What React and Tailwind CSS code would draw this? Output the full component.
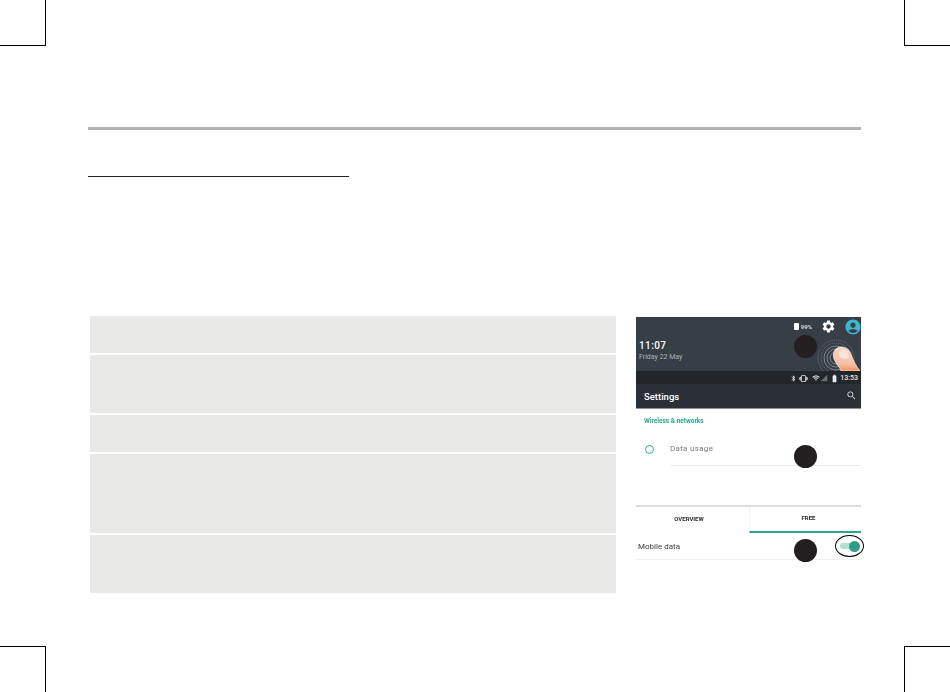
import React from "react";
import { MdSettings, MdAccountCircle, MdBluetooth, MdWifi, MdSignalCellular4Bar, MdBatteryFull, MdVibration, MdSearch } from "react-icons/md";

const rows = [37, 58, 37, 79, 58];

function Crop({ className }) {
  return <div className={"w-[46px] h-[46px] border-black " + className} />;
}

function Dot({ className }) {
  return <div className={"absolute w-[23px] h-[23px] rounded-full bg-[#231f20] " + className} />;
}

function Finger() {
  return (
    <svg className="absolute left-[170px] top-0 overflow-hidden" width="55" height="54" viewBox="0 0 55 54" fill="none">
      <defs>
        <linearGradient id="skin" x1="0" y1="30" x2="0" y2="54" gradientUnits="userSpaceOnUse">
          <stop offset="0" stopColor="#f8d4c3" />
          <stop offset="0.7" stopColor="#f6c0a6" />
          <stop offset="1" stopColor="#ee9460" />
        </linearGradient>
      </defs>
      {[6, 9, 12, 15, 18].map((r) => (
        <circle key={r} cx="30" cy="41" r={r} stroke="#c9ced3" strokeWidth="0.5" strokeDasharray={r > 12 ? "1 1" : undefined} opacity={r > 12 ? 0.7 : 0.95} />
      ))}
      <path d="M28 42C26 36 29 30 35 30C40 30 43 32 45 37C47 43 50 49 54 54L35 54C34 50 30 47 28 42Z" fill="url(#skin)" stroke="#fff" strokeWidth="0.6" />
      <path d="M33 38C32 34 36 31.500 39 32.500C42 34 43.500 39 42.500 41C40 43 34 42 33 38Z" fill="#fbe3d8" />
    </svg>
  );
}

function Phone() {
  return (
    <div className="relative w-[225px] mt-[1px] h-[276px] font-['Roboto',sans-serif] blur-[0.3px]">
      <div className="relative h-[54px] bg-[#373e46] flex flex-col">
        <div className="flex items-center justify-end h-[19px] text-white">
          <div className="w-[5px] h-[7px] bg-white rounded-[1px] mr-[2px]" />
          <span className="text-[6px] leading-none mr-[9px] text-[#e4e6e8] font-medium">99%</span>
          <MdSettings size={15} className="mr-[8px]" />
          <MdAccountCircle size={18} className="text-[#3fb6d0] -mr-[1px]" />
        </div>
        <div className="pl-[3px] mt-[4px] text-white text-[10px] leading-[12px] font-medium tracking-[0.4px]">11:07</div>
        <div className="pl-[3px] mt-[1px] text-[#aeb3b8] text-[7px] leading-[9px]">Friday 22 May</div>
        <Finger />
      </div>
      <div className="h-[13px] bg-[#22262a] flex items-center justify-end pr-[3px] pt-[1px] text-[#e8eaec]">
        <MdBluetooth size={7} className="mr-[2px]" />
        <MdVibration size={9} className="mr-[4px]" />
        <MdWifi size={8} />
        <MdSignalCellular4Bar size={8} className="mr-[2px] text-[#6b7075]" />
        <MdBatteryFull size={9} className="mr-[1px]" />
        <span className="text-[7px] leading-none font-medium">13:53</span>
      </div>
      <div className="h-[25px] bg-[#2b3036] flex items-center justify-between pl-[8px] pr-[4px] pt-[2px] text-white border-b border-[#8d9094]">
        <span className="text-[9.500px] font-medium">Settings</span>
        <MdSearch size={11} className="text-[#cfd2d5] -mt-[3px]" />
      </div>
      <div className="pl-[8px] pt-[8px] text-[6.500px] leading-[8px] font-bold text-[#26a88e]">Wireless &amp; networks</div>
      <div className="flex items-center h-[34px] mt-[7px]">
        <div className="ml-[9px] w-[9px] h-[9px] rounded-full border-[1.500px] border-[#2fa98f]" />
        <span className="ml-[16px] text-[8px] text-[#77797b] tracking-[0.3px] -mt-[1px]">Data usage</span>
      </div>
      <div className="ml-[34px] h-px bg-[#ebebeb] -mt-[1px]" />
      <div className="h-[39px]" />
      <div className="h-[2px] bg-[#dcdcdc]" />
      <div className="flex h-[26px] text-[6px] font-bold text-[#2d2d2d]">
        <div className="w-[113px] flex items-center justify-center pr-[7px] pb-[3px]">OVERVIEW</div>
        <div className="flex-1 flex items-center justify-center pl-[6px] pb-[3px] border-b-2 border-[#26a88e] border-l border-l-[#f3f3f3]">FREE</div>
      </div>
      <div className="flex items-center h-[27px] border-b border-[#f0f0f0] pl-[2px]">
        <span className="text-[8px] text-[#3a3a3a] mt-[2px]">Mobile data</span>
      </div>

      <Dot className="left-[158px] top-[18px]" />
      <Dot className="left-[158px] top-[128px]" />
      <Dot className="left-[158px] top-[222px]" />

      <div className="absolute left-[199px] top-[218px] w-[29px] h-[22px] rounded-[50%] border border-black flex items-center justify-center">
        <div className="relative w-[20px] h-[6px] rounded-full bg-[#b4e0d4]">
          <div className="absolute right-0 -top-[2.500px] w-[11px] h-[11px] rounded-full bg-[#2f9c85]" />
        </div>
      </div>
    </div>
  );
}

export default function App() {
  return (
    <div className="relative w-[950px] h-[692px] bg-white overflow-hidden">
      <Crop className="absolute left-0 top-0 border-r-[1.500px] border-b-[1.500px]" />
      <Crop className="absolute right-0 top-0 border-l-[1.500px] border-b-[1.500px]" />
      <Crop className="absolute left-0 bottom-0 border-r-[1.500px] border-t-[1.500px]" />
      <Crop className="absolute right-0 bottom-0 border-l-[1.500px] border-t-[1.500px]" />

      <div className="pt-[127px] pl-[88px] w-[861px]">
        <div className="h-[3px] bg-[#b3b3b3]" />
        <div className="mt-[46px] w-[261px] h-px bg-[#231f20]" />
        <div className="mt-[139px] flex">
          <div className="ml-[2px] w-[526px] flex flex-col gap-[2px]">
            {rows.map((h, i) => (
              <div key={i} style={{ height: h }} className="bg-[#e9eae8]" />
            ))}
          </div>
          <div className="ml-[20px]">
            <Phone />
          </div>
        </div>
      </div>
    </div>
  );
}
